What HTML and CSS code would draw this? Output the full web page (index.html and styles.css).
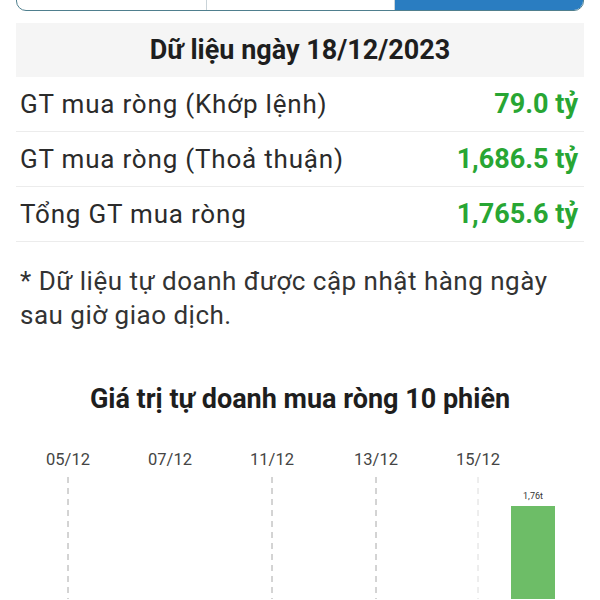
FILE: index.html
```html
<!DOCTYPE html>
<html lang="vi">
<head>
    <meta charset="UTF-8">
    <meta name="viewport" content="width=device-width, initial-scale=1.0">
    <title>Tự doanh</title>
    <link rel="stylesheet" href="styles.css">
</head>
<body>
    <!-- tab bar is scrolled mostly off the top, only its lower edge shows -->
    <div class="tabs">
        <div class="tab"></div>
        <div class="tab"></div>
        <div class="tab active"></div>
    </div>

    <div class="summary">
        <h2 class="summary-title">Dữ liệu ngày 18/12/2023</h2>
        <div class="row">
            <span class="label">GT mua ròng (Khớp lệnh)</span>
            <span class="value">79.0 tỷ</span>
        </div>
        <div class="row">
            <span class="label">GT mua ròng (Thoả thuận)</span>
            <span class="value">1,686.5 tỷ</span>
        </div>
        <div class="row">
            <span class="label">Tổng GT mua ròng</span>
            <span class="value">1,765.6 tỷ</span>
        </div>
    </div>

    <p class="note">* Dữ liệu tự doanh được cập nhật hàng ngày sau giờ giao dịch.</p>

    <div class="chart">
        <h3 class="chart-title">Giá trị tự doanh mua ròng 10 phiên</h3>
        <svg class="chart-plot" viewBox="0 0 568 160" width="568" height="160">
            <g class="axis-label">
                <text x="52" y="26">05/12</text>
                <text x="154" y="26">07/12</text>
                <text x="256" y="26">11/12</text>
                <text x="360" y="26">13/12</text>
                <text x="462" y="26">15/12</text>
            </g>
            <g class="grid">
                <line x1="52" y1="38" x2="52" y2="160"/>
                <line x1="256" y1="38" x2="256" y2="160"/>
                <line x1="360" y1="38" x2="360" y2="160"/>
                <line x1="462" y1="38" x2="462" y2="160" class="faint"/>
            </g>
            <rect class="bar" x="495" y="67" width="44" height="93"/>
            <text class="bar-label" x="517" y="60">1,76t</text>
        </svg>
    </div>
</body>
</html>
```

FILE: styles.css
```css
body {
    font-family: Roboto, "Noto Sans", sans-serif;
    margin: 0;
    padding: 0 16px;
    background-color: #fff;
    color: #2b2b2b;
}
.tabs {
    display: grid;
    grid-template-columns: 1fr 1fr 1fr;
    height: 40px;
    margin-top: -31px;
    border: 1.5px solid #4f7f8e;
    border-radius: 10px;
    overflow: hidden;
}
.tab + .tab {
    border-left: 1px solid #c9d3d8;
}
.tab.active {
    background-color: #2a7dc1;
}
.summary {
    margin-top: 12px;
}
.summary-title {
    margin: 0;
    height: 54px;
    display: flex;
    align-items: center;
    justify-content: center;
    background-color: #f5f5f5;
    font-size: 27px;
    font-weight: 700;
    color: #1e1e1e;
}
.row {
    display: flex;
    justify-content: space-between;
    align-items: center;
    height: 54px;
    padding: 0 6px 0 4px;
    border-bottom: 1px solid #ececec;
    font-size: 26px;
}
.label {
    letter-spacing: 0.8px;
}
.value {
    color: #28a633;
    font-size: 27px;
    font-weight: 700;
}
.note {
    margin: 22px 0 0;
    padding-left: 4px;
    font-size: 26px;
    letter-spacing: 0.5px;
    line-height: 34px;
    color: #333;
}
.chart {
    margin-top: 53px;
}
.chart-title {
    margin: 0;
    text-align: center;
    font-size: 27px;
    line-height: 28px;
    font-weight: 700;
    color: #1e1e1e;
}
.chart-plot {
    display: block;
    margin-top: 26px;
}
.axis-label text {
    font-size: 16.5px;
    fill: #444;
    text-anchor: middle;
}
.grid line {
    stroke: #a8a8a8;
    stroke-width: 1;
    stroke-dasharray: 6 5;
}
.grid line.faint {
    stroke: #dcdcdc;
}
.bar {
    fill: #6dbd67;
}
.bar-label {
    font-size: 9px;
    fill: #333;
    text-anchor: middle;
}
```
